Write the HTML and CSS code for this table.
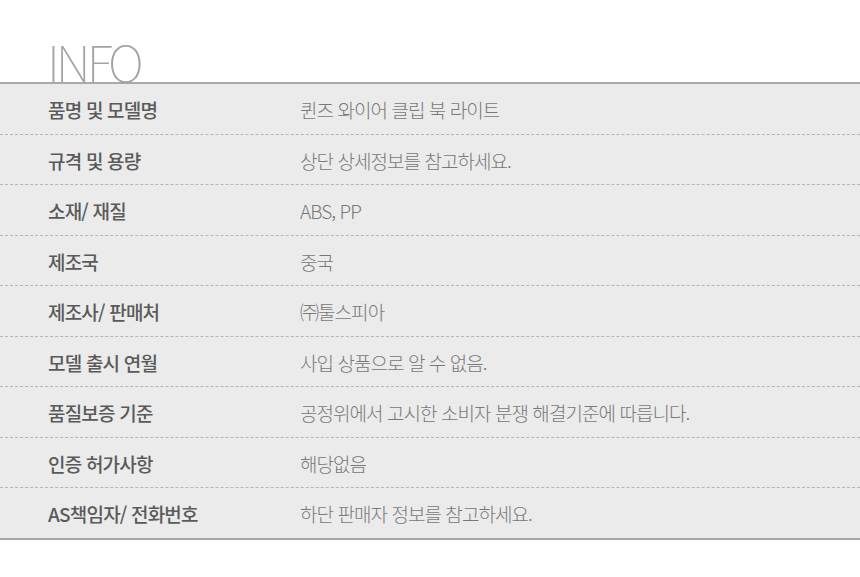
FILE: index.html
```html
<!DOCTYPE html>
<html lang="ko">
<head>
<meta charset="utf-8">
<link rel="stylesheet" href="styles.css">
</head>
<body>
<div class="info">
  <h2 class="title">INFO</h2>
  <div class="table">
    <div class="row"><div class="label">품명 및 모델명</div><div class="value">퀸즈 와이어 클립 북 라이트</div></div>
    <div class="row"><div class="label">규격 및 용량</div><div class="value">상단 상세정보를 참고하세요.</div></div>
    <div class="row"><div class="label">소재/ 재질</div><div class="value">ABS, PP</div></div>
    <div class="row"><div class="label">제조국</div><div class="value">중국</div></div>
    <div class="row"><div class="label">제조사/ 판매처</div><div class="value">㈜툴스피아</div></div>
    <div class="row"><div class="label">모델 출시 연월</div><div class="value">사입 상품으로 알 수 없음.</div></div>
    <div class="row"><div class="label">품질보증 기준</div><div class="value">공정위에서 고시한 소비자 분쟁 해결기준에 따릅니다.</div></div>
    <div class="row"><div class="label">인증 허가사항</div><div class="value">해당없음</div></div>
    <div class="row"><div class="label">AS책임자/ 전화번호</div><div class="value">하단 판매자 정보를 참고하세요.</div></div>
  </div>
</div>
</body>
</html>
```
FILE: styles.css
```css
html, body {
  margin: 0;
  padding: 0;
  background: #ffffff;
}
.info {
  width: 860px;
  padding-top: 38px;
  font-family: "Noto Sans CJK KR", "Noto Sans", sans-serif;
}
.title {
  margin: 0 0 0 47px;
  height: 44px;
  line-height: 44px;
  font-family: "Noto Sans CJK KR", "Noto Sans", sans-serif;
  font-weight: 100;
  font-size: 50px;
  color: #a3a3a3;
  letter-spacing: -4px;
}
.table {
  border-top: 2px solid #a9a9a9;
  border-bottom: 2px solid #a9a9a9;
  background: #ebebeb;
}
.row {
  display: flex;
  align-items: center;
  height: 50.5px;
  padding-top: 2px;
  box-sizing: border-box;
  border-bottom: 1px dashed #b5b5b5;
}
.row:last-child {
  border-bottom: none;
  height: 49.5px;
}
.label {
  width: 300px;
  padding-left: 48px;
  box-sizing: border-box;
  font-size: 19px;
  font-weight: 500;
  color: #5a5a5a;
  letter-spacing: -0.8px;
}
.value {
  font-size: 19px;
  font-weight: 300;
  color: #787878;
  letter-spacing: -0.95px;
}
```
